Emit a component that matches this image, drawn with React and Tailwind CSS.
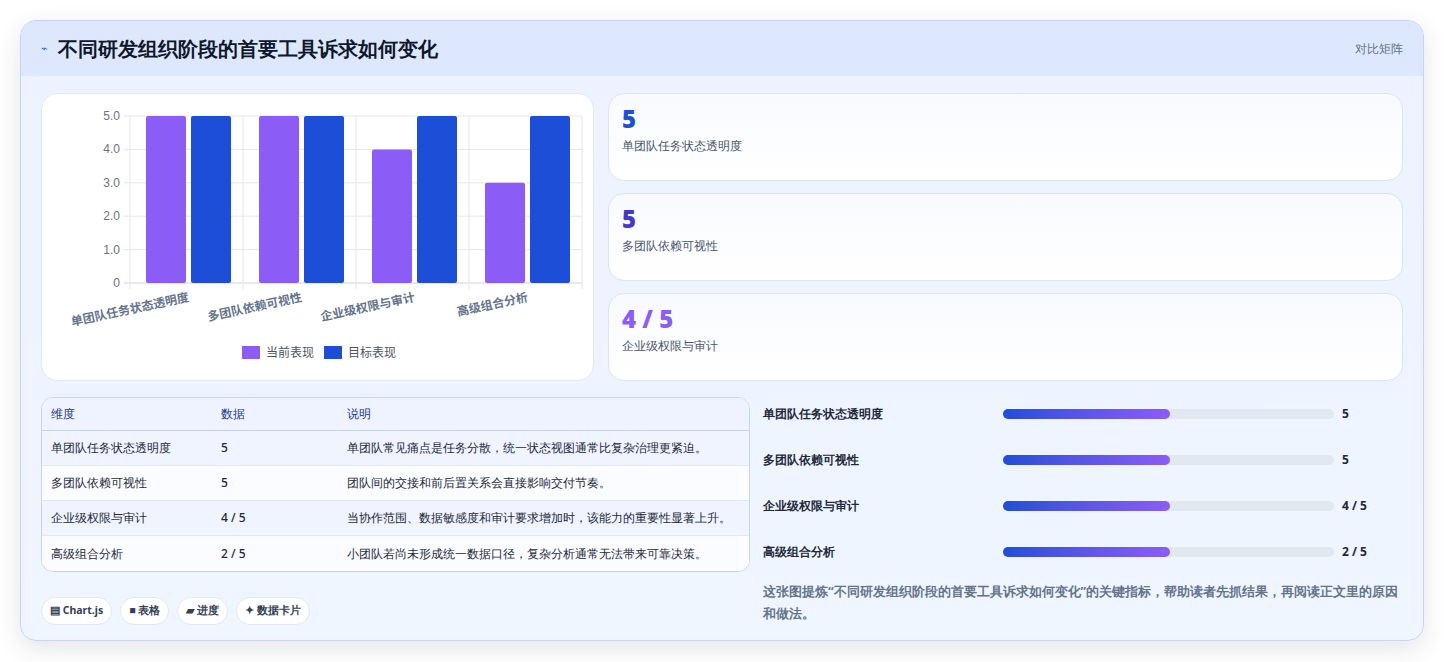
import React from "react";

const cats = ["单团队任务状态透明度", "多团队依赖可视性", "企业级权限与审计", "高级组合分析"];
const cur = [5, 5, 4, 3];
const tgt = [5, 5, 5, 5];

function Chart() {
  const x0 = 88, x1 = 540, y0 = 22, y1 = 189;
  const cw = (x1 - x0) / 4;
  const yv = (v) => y1 - (v / 5) * (y1 - y0);
  return (
    <svg width="553" height="287" className="block">
      {[0, 1, 2, 3, 4, 5].map((v) => (
        <g key={v}>
          <line x1={x0 - 6} x2={x1} y1={yv(v)} y2={yv(v)} stroke={v === 0 ? "#cbd5e1" : "#e5e7eb"} />
          <text x={x0 - 10} y={yv(v) + 4} textAnchor="end" fontSize="12" fill="#6b7280" fontFamily="Liberation Sans, sans-serif">{v === 0 ? "0" : v.toFixed(1)}</text>
        </g>
      ))}
      {[0, 1, 2, 3, 4].map((i) => (
        <line key={i} x1={x0 + i * cw} x2={x0 + i * cw} y1={y0} y2={y1 + 6} stroke="#e5e7eb" />
      ))}
      {cats.map((c, i) => {
        const cx = x0 + i * cw;
        return (
          <g key={c}>
            <rect x={cx + 16} y={yv(cur[i])} width="40" height={y1 - yv(cur[i])} rx="2" fill="#8b5cf6" />
            <rect x={cx + 61} y={yv(tgt[i])} width="40" height={y1 - yv(tgt[i])} rx="2" fill="#1d4ed8" />
            <text transform={`translate(${cx + cw / 2 + 3},${y1 + 18}) rotate(-12)`} textAnchor="end" fontSize="12" fontWeight="700" fill="#64748b" fontFamily="Noto Sans CJK SC, sans-serif">{c}</text>
          </g>
        );
      })}
      <rect x="200" y="252" width="18" height="13" fill="#8b5cf6" />
      <text x="224" y="263" fontSize="12" fill="#4b5563" fontFamily="Noto Sans CJK SC, sans-serif">当前表现</text>
      <rect x="282" y="252" width="18" height="13" fill="#1d4ed8" />
      <text x="306" y="263" fontSize="12" fill="#4b5563" fontFamily="Noto Sans CJK SC, sans-serif">目标表现</text>
    </svg>
  );
}

const rows = [
  ["单团队任务状态透明度", "5", "单团队常见痛点是任务分散，统一状态视图通常比复杂治理更紧迫。"],
  ["多团队依赖可视性", "5", "团队间的交接和前后置关系会直接影响交付节奏。"],
  ["企业级权限与审计", "4 / 5", "当协作范围、数据敏感度和审计要求增加时，该能力的重要性显著上升。"],
  ["高级组合分析", "2 / 5", "小团队若尚未形成统一数据口径，复杂分析通常无法带来可靠决策。"],
];

const stats = [
  ["5", "text-[#1d4ed8]", "单团队任务状态透明度"],
  ["5", "text-[#4338ca]", "多团队依赖可视性"],
  ["4 / 5", "text-[#8b5cf6]", "企业级权限与审计"],
];

const bars = [
  ["单团队任务状态透明度", "5"],
  ["多团队依赖可视性", "5"],
  ["企业级权限与审计", "4 / 5"],
  ["高级组合分析", "2 / 5"],
];

export default function App() {
  return (
    <div className="w-[1444px] h-[662px] bg-white p-5 font-['Noto_Sans_CJK_SC',sans-serif]">
      <div className="h-[621px] rounded-2xl border border-[#c7d2fe] bg-gradient-to-b from-[#ecf2ff] to-[#eff6ff] shadow-[0_8px_24px_rgba(30,41,59,0.12)] overflow-hidden">
        <div className="h-[55px] bg-[#dde8fe] flex items-center justify-between px-5">
          <div className="flex items-center gap-2.5">
            <span className="text-[#2563eb] text-[11px]">⌁</span>
            <span className="text-[20px] font-bold text-[#0f172a]">不同研发组织阶段的首要工具诉求如何变化</span>
          </div>
          <span className="text-[12px] font-medium text-[#64748b]">对比矩阵</span>
        </div>
        <div className="px-5 pt-[17px]">
          <div className="flex gap-[14px]">
            <div className="w-[553px] h-[288px] bg-white rounded-2xl border border-[#e2e8f0]">
              <Chart />
            </div>
            <div className="flex-1 flex flex-col gap-3">
              {stats.map(([v, c, l]) => (
                <div key={l} className="h-[88px] rounded-2xl border border-[#dbe4f5] bg-gradient-to-b from-[#f8faff] to-white px-[13px] pt-[9px]">
                  <div className={`text-[24px] font-black leading-[32px] ${c}`}>{v}</div>
                  <div className="text-[12px] font-medium text-[#475569] mt-0.5">{l}</div>
                </div>
              ))}
            </div>
          </div>
          <div className="flex gap-[13px] mt-[16px]">
            <div className="w-[709px]">
              <div className="rounded-xl border border-[#cbd5e1] overflow-hidden bg-white text-[12px] font-medium">
                <div className="flex h-[33px] items-center bg-[#eef3ff] border-b border-[#cbd5e1] text-[#1e3a8a]">
                  <div className="w-[179px] pl-[9px]">维度</div>
                  <div className="w-[126px]">数据</div>
                  <div className="flex-1">说明</div>
                </div>
                {rows.map((r, i) => (
                  <div key={i} className={`flex h-[35px] items-center text-[#1e293b] ${i < 3 ? "border-b border-[#e2e8f0]" : ""} ${i % 2 === 0 ? "bg-[#eff4ff]" : "bg-[#fbfcff]"}`}>
                    <div className="w-[179px] pl-[9px]">{r[0]}</div>
                    <div className="w-[126px]">{r[1]}</div>
                    <div className="flex-1">{r[2]}</div>
                  </div>
                ))}
              </div>
              <div className="flex gap-2 mt-[25px] text-[10.5px] font-bold text-[#334155]">
                {["▤ Chart.js", "■ 表格", "▰ 进度", "✦ 数据卡片"].map((t) => (
                  <span key={t} className="h-[28px] px-2 flex items-center rounded-full bg-white border border-[#e2e8f0]">{t}</span>
                ))}
              </div>
            </div>
            <div className="flex-1 text-[12px]">
              <div className="flex flex-col gap-[28px] pt-[8px]">
                {bars.map(([l, v]) => (
                  <div key={l} className="flex items-center h-[18px] font-bold text-[#1e293b]">
                    <div className="w-[240px]">{l}</div>
                    <div className="w-[331px] h-[10px] rounded-full bg-[#e2e8f0]">
                      <div className="w-[167px] h-full rounded-full bg-gradient-to-r from-[#1d4ed8] to-[#8b5cf6]" />
                    </div>
                    <div className="ml-2">{v}</div>
                  </div>
                ))}
              </div>
              <p className="mt-[20px] text-[12.5px] font-bold leading-[22px] text-[#64748b]">这张图提炼“不同研发组织阶段的首要工具诉求如何变化”的关键指标，帮助读者先抓结果，再阅读正文里的原因和做法。</p>
            </div>
          </div>
        </div>
      </div>
    </div>
  );
}
